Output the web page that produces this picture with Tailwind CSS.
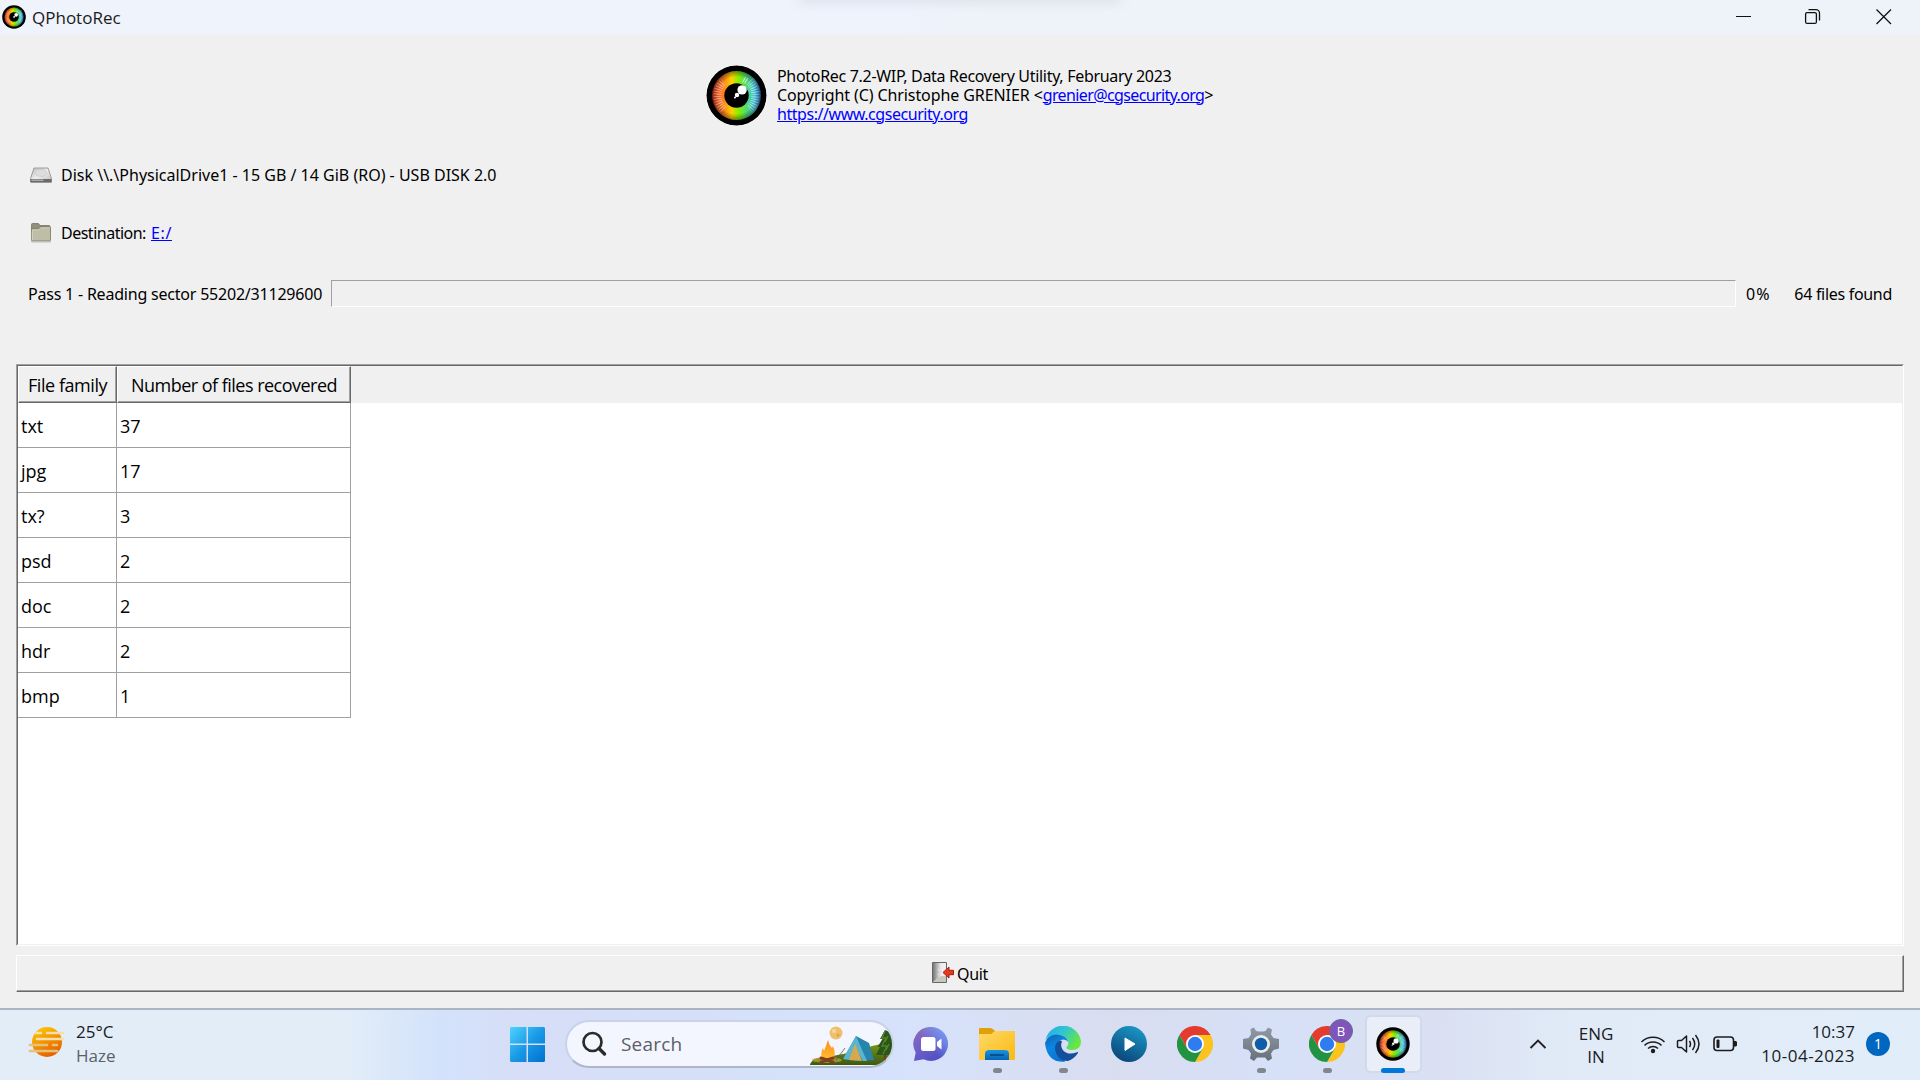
<!DOCTYPE html>
<html lang="en">
<head>
<meta charset="utf-8">
<title>QPhotoRec</title>
<script src="https://cdn.jsdelivr.net/npm/@tailwindcss/browser@4"></script>
</head>
<body class="w-[1920px] h-[1080px] overflow-hidden bg-[#f0f0f0] text-black flex flex-col">
<svg class="absolute w-0 h-0">
  <defs>
    <linearGradient id="iris" x1="0" x2="1"><stop offset="0" stop-color="#e03018"/><stop offset=".22" stop-color="#ff7a20"/><stop offset=".4" stop-color="#ffd000"/><stop offset=".55" stop-color="#80f000"/><stop offset=".72" stop-color="#50d880"/><stop offset=".88" stop-color="#40c0e0"/><stop offset="1" stop-color="#2878c8"/></linearGradient>
    <radialGradient id="shade"><stop offset=".75" stop-color="#000" stop-opacity="0"/><stop offset="1" stop-color="#000" stop-opacity=".4"/></radialGradient>
    <symbol id="eye" viewBox="0 0 60 60">
      <circle cx="30" cy="30" r="29.500"/>
      <circle cx="30" cy="30" r="24" fill="url(#iris)"/>
      <g stroke="#fff" stroke-width="8" fill="none" opacity=".6"><path d="M17.300 43.600A18.600 18.600 0 0 1 17.300 16.400" stroke-dasharray=".8 1.500"/><path d="M42.700 16.400A18.600 18.600 0 0 1 42.700 43.600" stroke-dasharray=".8 1.500"/></g>
      <path d="M38 18l3-5M36 17l3-5" stroke="#fff" opacity=".7"/>
      <circle cx="30" cy="30" r="24" fill="url(#shade)"/>
      <circle cx="30" cy="30" r="12"/>
      <circle cx="35.500" cy="24.500" r="4.600" fill="#fff"/><circle cx="30.500" cy="29.500" r="2.200" fill="#fff"/><circle cx="28.500" cy="32" r="1" fill="#fff"/>
    </symbol>
    <symbol id="chrome" viewBox="0 0 36 36">
      <path d="M2.400 9A18 18 0 0 1 33.600 9L18 9L10.200 22.500Z" fill="#e33b2e"/>
      <path d="M33.600 9A18 18 0 0 1 18 36L25.800 22.500L18 9Z" fill="#fcc31e"/>
      <path d="M18 36A18 18 0 0 1 2.400 9L10.200 22.500L25.800 22.500Z" fill="#229342"/>
      <circle cx="18" cy="18" r="9" fill="#fff"/><circle cx="18" cy="18" r="7.200" fill="#2f7bf0"/>
    </symbol>
  </defs>
</svg>

<header class="h-[34px] shrink-0 bg-linear-[90deg,#eef3fc_0%,#eef3fc_47%,#edf3f8_52%,#edf3f8_75%,#eef3fa_100%] flex items-center relative overflow-hidden font-['Open_Sans',sans-serif]">
  <svg class="ml-[2px] size-6"><use href="#eye"/></svg>
  <span class="ml-[6px] pt-px text-[17px] text-[#1b1b1b] whitespace-nowrap">QPhotoRec</span>
  <div class="absolute left-[800px] -top-[4px] w-[320px] h-[4px] shadow-[0_0_12px_#a0a8b890]"></div>
  <svg class="ml-auto mr-[24px]" width="160" height="34" fill="none" stroke="#111" stroke-width="1.300"><path d="M0 16.500h15" stroke-width="1"/><rect x="69.600" y="12.600" width="10.800" height="10.800" rx="1.500"/><path d="M72.500 9.700h7.500a3.500 3.500 0 0 1 3.500 3.500v7.300"/><path d="M140.500 9.500l14.500 14.500M155 9.500l-14.500 14.500"/></svg>
</header>

<main class="h-[974px] shrink-0 flex flex-col px-4 font-['Noto_Sans',sans-serif] text-[16px]">
  <section class="h-[122px] shrink-0 flex items-center pl-[690px]">
    <svg class="w-[61px] h-[61px] rounded-full bg-white shrink-0"><use href="#eye"/></svg>
    <div class="ml-[10px] leading-[19px] whitespace-nowrap">
      <p class="tracking-[-0.31px]">PhotoRec 7.2-WIP, Data Recovery Utility, February 2023</p>
      <p><span class="tracking-[-0.09px]">Copyright (C) Christophe GRENIER &lt;</span><a class="text-[#0000ff] underline tracking-[-0.62px]">grenier@cgsecurity.org</a><span>&gt;</span></p>
      <p><a class="text-[#0000ff] underline tracking-[-0.45px]">https://www.cgsecurity.org</a></p>
    </div>
  </section>

  <section class="h-[38px] shrink-0 flex items-center pl-[13px]">
    <svg width="24" height="20" viewBox="0 0 24 20"><defs><linearGradient id="dk" x1="0" y1="0" x2="1" y2="1"><stop stop-color="#bbb"/><stop offset=".5" stop-color="#eee"/><stop offset="1" stop-color="#bbb"/></linearGradient></defs><path d="M5 3h14l3.500 10.500v3.500h-21v-3.500z" fill="url(#dk)" stroke="#8a8a8a" stroke-width=".8"/><ellipse cx="12" cy="8" rx="6" ry="3.500" fill="#ddd" stroke="#c4c4c4" stroke-width=".6"/><path d="M1.500 14h21v3.500h-21z" fill="#6a6a6a"/><path d="M2.500 14.500h12v1.500h-12z" fill="#aaa"/></svg>
    <span class="ml-[8px] whitespace-nowrap">Disk \\.\PhysicalDrive1 - 15 GB / 14 GiB (RO) - USB DISK 2.0</span>
  </section>

  <section class="h-[38px] mt-[20px] shrink-0 flex items-center pl-[13px]">
    <svg width="24" height="20" viewBox="0 0 24 20"><path d="M2.500 1.500q0-1 1-1h6l1.500 2h9q1 0 1 1v5h-18.500z" fill="#8f8f7c" stroke="#6b6b5a" stroke-width=".7"/><path d="M2.500 7q0-1 1-1h6l2-2h9q1 0 1 1v12q0 1-1 1h-17q-1 0-1-1z" fill="#bdbda8" stroke="#77775f" stroke-width=".8"/><path d="M3.300 17v-10.200h6.500l2-2h9" fill="none" stroke="#dadacb" stroke-width=".8"/><path d="M2 19h20" stroke="#bbb" /></svg>
    <span class="ml-[8px] w-[90px] whitespace-nowrap tracking-[-0.5px]">Destination:</span><a class="text-[#0000ff] underline tracking-[0.6px]">E:/</a>
  </section>

  <section class="h-[27px] mt-[28px] shrink-0 flex items-center pl-[12px] pr-[12px] whitespace-nowrap">
    <span class="w-[294px] tracking-[-0.21px]">Pass 1 - Reading sector 55202/31129600</span>
    <div class="ml-[9px] w-[1405px] h-[27px] border border-t-[#a0a0a0] border-l-[#a0a0a0] border-r-white border-b-white"></div>
    <span class="ml-[10px] tracking-[1px]">0%</span>
    <span class="ml-auto tracking-[-0.3px]">64 files found</span>
  </section>

  <section class="mt-[57px] h-[582px] shrink-0 border border-t-[#a0a0a0] border-l-[#a0a0a0] border-r-white border-b-white">
    <div class="h-full bg-white border border-t-[#696969] border-l-[#696969] border-r-[#efefef] border-b-[#efefef] font-['Open_Sans',sans-serif] text-[18px]">
      <div class="h-[37px] bg-[#f0f0f0] flex whitespace-nowrap">
        <div class="w-[99px] border border-t-white border-l-white border-r-[#696969] border-b-[#696969]"><div class="h-full border-r border-b border-[#a0a0a0] flex items-center pt-[2px] pl-[9px] tracking-[-0.45px]">File family</div></div>
        <div class="w-[234px] border border-t-white border-l-white border-r-[#696969] border-b-[#696969]"><div class="h-full border-r border-b border-[#a0a0a0] flex items-center pt-[2px] pl-[13px] tracking-[-0.52px]">Number of files recovered</div></div>
      </div>
      <div id="rows" class="w-[333px]"></div>
    </div>
  </section>

  <button class="mt-[9px] h-[37px] shrink-0 border border-t-white border-l-white border-r-[#696969] border-b-[#696969]">
    <span class="w-full h-full border-r border-b border-[#a0a0a0] flex items-center pl-[914px]">
      <svg width="24" height="24" viewBox="0 0 24 24"><defs><linearGradient id="dr"><stop stop-color="#777"/><stop offset="1" stop-color="#eee"/></linearGradient></defs><path d="M1.500 1.500h14v20h-14z" fill="#eee" stroke="#666"/><path d="M2 2h8v13l-8 6z" fill="url(#dr)"/><path d="M2 21l8-6h5v6z" fill="#c6c9bf"/><path d="M7 8l3 3-3 3" stroke="#ddd" fill="none" stroke-width="1.500"/><path d="M12 11.500l6-5.500v3.300h4.500v4.400h-4.500v3.300z" fill="#e8391c" stroke="#a51f10"/></svg>
      <span class="ml-[2px] pt-[2px] tracking-[-0.3px]">Quit</span>
    </span>
  </button>
</main>

<footer class="h-[72px] shrink-0 border-t-2 border-[#abb4c4] pb-[2px] flex items-center font-['Open_Sans',sans-serif] bg-linear-[90deg,#e2edf7_0%,#e2edf8_18%,#d3e2fb_23%,#d7def7_27%,#d5e0f8_35%,#d6e2fb_47%,#d9ddf0_58%,#d6e0f7_66%,#dae0f2_75%,#e1ebf7_82%,#e1edf9_100%]">
  <div class="w-[494px] flex items-center pl-[28px]">
    <svg width="38" height="34" viewBox="0 0 38 34"><defs><linearGradient id="sun" x1=".2" y1="0" x2=".7" y2="1"><stop stop-color="#ffc800"/><stop offset="1" stop-color="#e55a00"/></linearGradient></defs><circle cx="19" cy="15" r="15" fill="url(#sun)"/><g stroke-width="2.700" stroke-linecap="round"><path d="M8 6h5M19 6h16M9 12h26" stroke="#f6dfae"/><path d="M2 18h17M25 18h4M2 24h27" stroke="#e2c27c"/></g></svg>
    <div class="ml-[10px] text-[17px] leading-6 whitespace-nowrap"><p class="text-[#1a1c1f]">25°C</p><p class="text-[#5c6168]">Haze</p></div>
  </div>
  <div class="w-[66px] flex justify-center">
    <svg width="35" height="35"><defs><linearGradient id="wn" x1="0" y1="0" x2="35" y2="35" gradientUnits="userSpaceOnUse"><stop stop-color="#4fd3ff"/><stop offset=".5" stop-color="#1a9ae6"/><stop offset="1" stop-color="#0070cf"/></linearGradient></defs><path fill="url(#wn)" d="M1 0h15.500v16.500h-16.500v-15.500zM18 0h16l1 1v15.500h-17zM0 18h16.500v17h-15.500l-1-1zM18 18h17v16l-1 1h-16z"/></svg>
  </div>
  <div class="ml-[5px] w-[329px] h-[48px] rounded-full border-2 border-[#c8d2e8] border-b-[#adb7cb] bg-[#f3f6fe] flex items-center overflow-hidden shrink-0">
    <svg class="ml-[14px]" width="26" height="26" fill="none" stroke="#2b2b2b" stroke-width="2.700"><circle cx="11.500" cy="11" r="9"/><path d="M18 17.500l5.500 5.500" stroke-width="3.400" stroke-linecap="round"/></svg>
    <span class="ml-[14px] text-[19px] tracking-[0.2px] text-[#5b5e66]">Search</span>
    <svg class="ml-auto" width="84" height="44" viewBox="0 0 84 44"><defs><linearGradient id="gr" x1="0" y1="0" x2="0" y2="1"><stop stop-color="#7a9818"/><stop offset="1" stop-color="#3c5a10"/></linearGradient><linearGradient id="fl" x1="0" y1="0" x2="0" y2="1"><stop stop-color="#ff8a1c"/><stop offset="1" stop-color="#ffc030"/></linearGradient></defs><path d="M2 43q1-7 17-8q30-5 45-11q12-3 20-3v22z" fill="url(#gr)"/><ellipse cx="19" cy="38" rx="15" ry="3" fill="#b59a3c" opacity=".8"/><circle cx="28" cy="11" r="6.500" fill="#f0bf6c"/><circle cx="26" cy="9" r="2" fill="#f9d894"/><circle cx="30" cy="13" r="1.500" fill="#dda450"/><path d="M20 18q1 5 4 8l1-2q4 9-1 14h-8q-5-5-1-12l1 3q2-5 4-11z" fill="url(#fl)"/><path d="M13 36l12 4M25 36l-12 4" stroke="#80401c" stroke-width="3" stroke-linecap="round"/><path d="M37 26l-9 12M62 30l6 10" stroke="#555" stroke-width=".8"/><path d="M48 14l13 7 5 17-18 1-13-2z" fill="#2784aa"/><path d="M48 14l-13 23 7 1 5-13 8 14h4z" fill="#5cb5d0"/><path d="M47 22l-6 16 13 1z" fill="#d8a94c"/><path d="M77 8l-5 9h2.500l-5 8h2.500l-4 8h16v-22z" fill="#2c571c"/><path d="M77 9l-3 7h4l-4 8h5l-4 8M80 14l-3 6M81 22l-3 6" fill="none" stroke="#57812a" stroke-width="1.300"/><path d="M77 33v5" stroke="#6b4020" stroke-width="2"/></svg>
  </div>
  <div class="ml-[4px] flex h-[68px]">
    <div class="w-[66px] flex justify-center pt-[17px]"><svg width="36" height="36" viewBox="0 0 36 36"><defs><linearGradient id="ch" x1="0" y1="0" x2=".7" y2="1"><stop stop-color="#9a6aa8"/><stop offset=".4" stop-color="#7463c8"/><stop offset="1" stop-color="#4f4fc4"/></linearGradient><linearGradient id="ch2" x1="1" y1="0" x2="0" y2=".8"><stop stop-color="#78a8ff"/><stop offset=".6" stop-color="#78a8ff" stop-opacity="0"/></linearGradient></defs><path d="M18 0a17 17 0 1 1-7.500 32.300L1 34l1.700-8.500A17 17 0 0 1 18 0z" fill="url(#ch)"/><path d="M18 0a17 17 0 1 1-7.500 32.300L1 34l1.700-8.500A17 17 0 0 1 18 0z" fill="url(#ch2)"/><rect x="8" y="10" width="14.500" height="14" rx="2.500" fill="#fff"/><path d="M24 15l4.500-3.500v11l-4.500-3.500z" fill="#fff"/></svg></div>
    <div class="w-[66px] flex flex-col items-center pt-[17px]"><svg width="36" height="34" viewBox="0 0 36 34"><defs><linearGradient id="fo" x1="0" y1="0" x2="1" y2="1"><stop stop-color="#ffd968"/><stop offset="1" stop-color="#fbb912"/></linearGradient><linearGradient id="fb" x1="0" y1="0" x2="0" y2="1"><stop stop-color="#1496e0"/><stop offset="1" stop-color="#0864b4"/></linearGradient></defs><path d="M0 2q0-1 1-1h10q2 0 4 2l1 1h19q1 0 1 1v10h-36z" fill="#e0a008"/><path d="M0 8q0-1 1-1h11l4-3h19q1 0 1 1v27q0 1-1 1h-34q-1 0-1-1z" fill="url(#fo)"/><path d="M6 33v-6q0-4 4-4h16q4 0 4 4v6z" fill="url(#fb)"/><path d="M11 28h14" stroke="#06427c" stroke-width="1.500"/></svg><i class="mt-[7px] w-[9px] h-[5px] rounded-full bg-[#81868f]"></i></div>
    <div class="w-[66px] flex flex-col items-center pt-[16px]"><svg width="36" height="36" viewBox="0 0 36 36"><defs><linearGradient id="e1" x1="0" y1="0" x2="1" y2=".5"><stop stop-color="#24a8ee"/><stop offset=".5" stop-color="#30c5d2"/><stop offset="1" stop-color="#66e840"/></linearGradient><linearGradient id="e2" x1="0" y1="0" x2=".5" y2="1"><stop stop-color="#0f62b4"/><stop offset=".5" stop-color="#0c86e2"/><stop offset="1" stop-color="#0a72d0"/></linearGradient></defs><path d="M.5 14A18 18 0 0 1 36 15.500q0 8.500-9 8.500q-6 0-5.500-2.500q2-2 2-5.500q-2-7-12-7q-8 0-11 5z" fill="url(#e1)"/><path d="M0 17q2-8 11-8.500q11 .5 12.500 8q-2-3-5.500-3q-7 1-6.500 8q1 7 8 12l.5 2.300Q2 37 0 17z" fill="url(#e2)"/><path d="M15 14.300Q9.500 17 10 23q2 12 13 12q6-2 10-8q.3-1.300-1-.8q-9 3.500-14-2q-3-4-1-9z" fill="#124f9c"/></svg><i class="mt-[6px] w-[9px] h-[5px] rounded-full bg-[#81868f]"></i></div>
    <div class="w-[66px] flex justify-center pt-[16px]"><svg width="36" height="36"><defs><linearGradient id="pl" x1=".8" y1="0" x2=".3" y2="1"><stop stop-color="#1a9ac8"/><stop offset="1" stop-color="#0c4478"/></linearGradient></defs><circle cx="18" cy="18" r="18" fill="url(#pl)"/><path d="M14 12l10 6-10 6.500z" fill="#fff" stroke="#fff" stroke-linejoin="round"/></svg></div>
    <div class="w-[66px] flex justify-center pt-[16px]"><svg class="size-9"><use href="#chrome"/></svg></div>
    <div class="w-[66px] flex flex-col items-center pt-[16px]"><svg width="36" height="36" viewBox="0 0 36 36"><defs><linearGradient id="ge" x1="0" y1="0" x2="0" y2="1"><stop stop-color="#909aa4"/><stop offset="1" stop-color="#66717c"/></linearGradient></defs><path d="M13 5L11 1.500L7.500 3L8 8.500L5.500 12L0 13V22.500L5.500 24L8 27.500L7 32.500L11 35L14 31.500H22L25 35L29 32.500L28 27.500L30.500 24L36 22.500V13L30.500 12L28 8.500L29 3.500L25 1.500L22.500 5Q18 6 13 5z" fill="url(#ge)"/><circle cx="18" cy="18" r="9" fill="#ecebe8"/><circle cx="18" cy="18" r="6.200" fill="#0f5ca8"/></svg><i class="mt-[6px] w-[9px] h-[5px] rounded-full bg-[#81868f]"></i></div>
    <div class="w-[66px] flex flex-col items-center pt-[16px] relative"><svg class="size-9"><use href="#chrome"/></svg><i class="mt-[6px] w-[9px] h-[5px] rounded-full bg-[#81868f]"></i><span class="absolute left-[35px] top-[9px] size-6 rounded-full bg-[#8055bb] border border-[#6a6a86] text-white text-[13px] leading-[22px] text-center">B</span></div>
    <div class="w-[66px] pt-[5px] flex justify-center"><div class="w-[57px] h-[58px] shrink-0 rounded-[6px] border-2 border-[#d3d9ea] bg-[#eaeef8] flex flex-col items-center pt-[10px]"><svg class="size-[34px] shrink-0"><use href="#eye"/></svg><i class="mt-[7px] w-6 h-[5px] shrink-0 rounded-full bg-[#0078d7]"></i></div></div>
  </div>
  <div class="ml-auto flex items-center h-full text-[#1a1c1f] text-[17px]">
    <svg width="18" height="12" fill="none" stroke="#222" stroke-width="1.900"><path d="M1.500 10l7.500-7.500 7.500 7.500"/></svg>
    <div class="ml-[31px] w-[36px] pt-px text-center leading-[23px] whitespace-nowrap"><p>ENG</p><p>IN</p></div>
    <svg class="ml-[26px]" width="26" height="20" fill="none" stroke="#1c1c1c" stroke-width="1.500"><path d="M1.500 8a16.500 16.500 0 0 1 23 0M4.500 11.500a12 12 0 0 1 17 0M8 14.500a7.500 7.500 0 0 1 10 0"/><circle cx="13" cy="17" r="2.200" fill="#1c1c1c" stroke="none"/></svg>
    <svg class="ml-[10px]" width="26" height="22" fill="none" stroke="#1c1c1c" stroke-width="1.500"><path d="M1.500 8.500q0-1 1-1h3l5-4.500v16l-5-4.500h-3q-1 0-1-1z" stroke-linejoin="round"/><path d="M13.500 8q2 3 0 6M16.500 5q4.500 6 0 12M19.500 2q7 9 0 18"/></svg>
    <svg class="ml-[10px]" width="26" height="18" fill="none" stroke="#1c1c1c" stroke-width="1.600"><rect x="2" y="2" width="19.500" height="13.500" rx="3"/><rect x="4.500" y="4.500" width="3" height="8.500" rx="1" fill="#1c1c1c" stroke="none"/><path d="M22 6h2l1 1v3.500l-1 1h-2z" fill="#1c1c1c" stroke="none"/></svg>
    <div class="ml-[24px] w-[93px] flex flex-col items-end leading-6 whitespace-nowrap"><p>10:37</p><p class="tracking-[0.5px]">10-04-2023</p></div>
    <span class="ml-[11px] mr-[30px] size-6 rounded-full bg-[#0067c0] text-white text-[14px] leading-6 text-center">1</span>
  </div>
</footer>
<script>
const data=[['txt',37],['jpg',17],['tx?',3],['psd',2],['doc',2],['hdr',2],['bmp',1]];
document.getElementById('rows').innerHTML=data.map(r=>`<div class="h-[45px] flex border-b border-[#a0a0a0]"><div class="w-[99px] border-r border-[#a0a0a0] flex items-center pl-[3px] pt-[3px]">${r[0]}</div><div class="w-[234px] border-r border-[#a0a0a0] flex items-center pl-[3px] pt-[3px]">${r[1]}</div></div>`).join('');
</script>
</body>
</html>
